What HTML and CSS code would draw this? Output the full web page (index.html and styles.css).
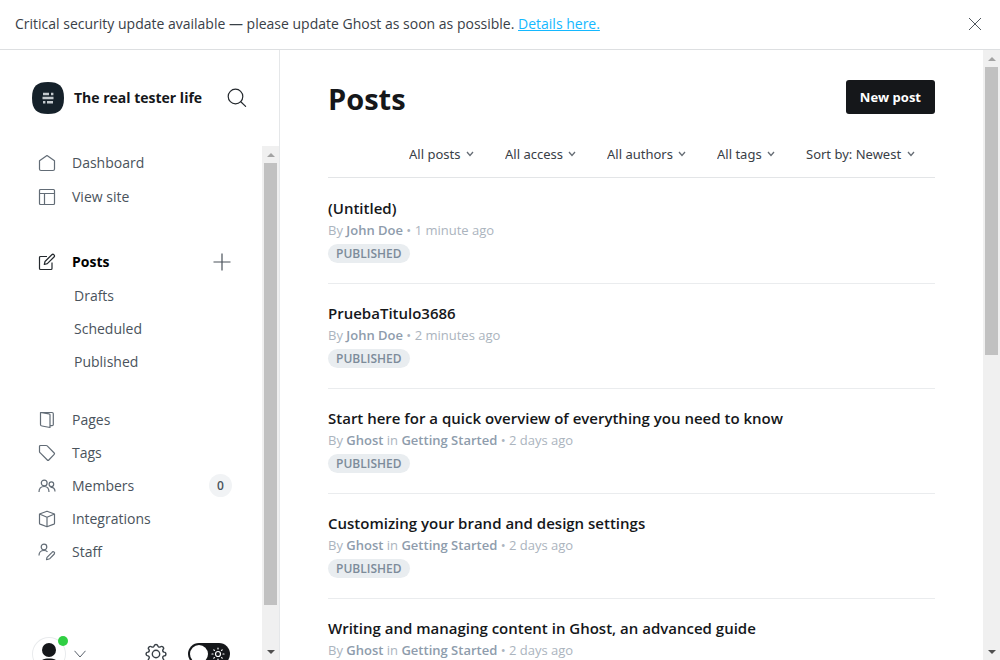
FILE: index.html
```
<!DOCTYPE html>
<html lang="en">
<head>
<meta charset="utf-8">
<meta name="viewport" content="width=device-width, initial-scale=1">
<title>Posts - The real tester life</title>
<link rel="stylesheet" href="styles.css">
</head>
<body>
<svg class="defs" aria-hidden="true">
  <symbol id="chevron" viewBox="0 0 8 6"><path d="M1 1l3 3.500L7 1" fill="none" stroke="#666d75" stroke-width="1.300"/></symbol>
  <symbol id="arrow-up" viewBox="0 0 8 4"><path d="M4 0l4 4H0z"/></symbol>
  <symbol id="arrow-down" viewBox="0 0 8 4"><path d="M4 4l4-4H0z"/></symbol>
</svg>

<aside class="alert">
  <p class="alert-text">Critical security update available — please update Ghost as soon as possible. <a href="#">Details here.</a></p>
  <button class="icon-button" type="button" aria-label="Close">
    <svg width="14" height="14" viewBox="0 0 14 14"><path d="M1 1l12 12M13 1L1 13" fill="none" stroke="#50575e"/></svg>
  </button>
</aside>

<div class="app">
  <div class="sidebar">
    <header class="site">
      <svg class="site-logo" width="32" height="32" viewBox="0 0 32 32">
        <path d="M16 0C27 0 32 4 32 16S27 32 16 32 0 28 0 16 5 0 16 0z" fill="#15212a"/>
        <path d="M11 12h6M19 12h2.400M10.500 16h11M11 20.300h2.400M15 20.300h6" stroke="#c3c9cd" stroke-width="2.400" fill="none"/>
      </svg>
      <span class="site-name">The real tester life</span>
      <button class="icon-button" type="button" aria-label="Search">
        <svg width="20" height="20" viewBox="0 0 20 20" fill="none" stroke="#24292e" stroke-width="1.200" stroke-linecap="round"><circle cx="8.500" cy="8.500" r="7.300"/><path d="M13.800 13.800l4.800 4.600"/></svg>
      </button>
    </header>

    <div class="sidebar-scroll">
      <div class="sidebar-content">
        <nav class="nav">
          <ul class="nav-group nav-top">
            <li><a href="#"><svg viewBox="0 0 18 18"><path d="M1.500 6.800L9 1.500l7.500 5.300v8.200a1.500 1.500 0 0 1-1.500 1.500H3A1.500 1.500 0 0 1 1.500 15z"/></svg>Dashboard</a></li>
            <li><a href="#"><svg viewBox="0 0 18 18"><rect x="1.500" y="1.500" width="15" height="15" rx="1"/><path d="M1.500 5.500h15M6.500 5.500v11"/></svg>View site</a></li>
          </ul>
          <ul class="nav-group nav-posts">
            <li class="active"><a href="#"><svg viewBox="0 0 18 18"><path d="M9 3.500H2.500a1 1 0 0 0-1 1v11a1 1 0 0 0 1 1h10.500a1 1 0 0 0 1-1V9.500M7 8.500l6.800-6.700a1.500 1.500 0 0 1 2.200 2.200L9.300 10.700l-3 .8z"/></svg>Posts</a>
              <button class="icon-button" type="button" aria-label="New post"><svg width="18" height="18" viewBox="0 0 18 18"><path d="M9 .5v17M.5 9h17" fill="none" stroke="#4a525a" stroke-width="1.200"/></svg></button>
            </li>
            <li class="sub"><a href="#">Drafts</a></li>
            <li class="sub"><a href="#">Scheduled</a></li>
            <li class="sub"><a href="#">Published</a></li>
          </ul>
          <ul class="nav-group nav-manage">
            <li><a href="#"><svg viewBox="0 0 18 18"><path d="M2.500 1.500l8.500 1.300a1 1 0 0 1 1 1v12.700l-8-1.500a1.500 1.500 0 0 1-1.500-1.500zM2.500 1.500h11.500a1.300 1.300 0 0 1 1.300 1.300V13.500a1.200 1.200 0 0 1-1.300 1.200h-2"/></svg>Pages</a></li>
            <li><a href="#"><svg viewBox="0 0 18 18"><path d="M1.500 2.500a1 1 0 0 1 1-1h5.700a1.500 1.500 0 0 1 1 .4l7 7.100a1 1 0 0 1 0 1.400L10.800 16a1 1 0 0 1-1.500 0L2 8.700a1.500 1.500 0 0 1-.5-1z"/></svg>Tags</a></li>
            <li><a href="#"><svg viewBox="0 0 18 18"><circle cx="6.200" cy="6" r="2.900"/><path d="M1 15c0-3.500 2-5.500 5.200-5.500S11 11.500 11 15"/><circle cx="13.400" cy="7.200" r="2.300"/><path d="M12.500 10.500c2.800-.5 4.500 1.300 4.500 4"/></svg>Members</a><span class="count">0</span></li>
            <li><a href="#"><svg viewBox="0 0 18 18"><path d="M1.500 4L9 1.200 16.500 4v9.200a1 1 0 0 1-.6.9L9 16.800l-6.900-2.700a1 1 0 0 1-.6-.9zM1.500 4L9 7.200 16.500 4M9 7.200v9.600"/></svg>Integrations</a></li>
            <li><a href="#"><svg viewBox="0 0 18 18"><circle cx="6" cy="4" r="2.800"/><path d="M1 12.500c0-3 2-5 5-5 1.500 0 2.700.5 3.500 1.300M9 14.300l5-5a1.300 1.300 0 0 1 2.300 1.700l-4.500 4.700-3.300 1z"/></svg>Staff</a></li>
          </ul>
        </nav>

        <footer class="user-bar">
          <button class="user-menu" type="button" aria-label="User menu">
            <span class="avatar">
              <svg width="34" height="34" viewBox="0 0 34 34"><circle cx="17" cy="13" r="7" fill="#15171a"/><path d="M6 30c0-6 5-8.500 11-8.500S28 24 28 30z" fill="#15171a"/></svg>
              <span class="status-dot"></span>
            </span>
            <svg width="12" height="8" viewBox="0 0 12 8"><path d="M.5.8L6 7 11.500.8" fill="none" stroke="#59616a"/></svg>
          </button>
          <a class="settings" href="#" aria-label="Settings">
            <svg width="22" height="22" viewBox="0 0 22 22" fill="none" stroke="#394047" stroke-width="1.400" stroke-linejoin="round"><circle cx="11" cy="11" r="3.700"/><path d="M9.200 2.800a1.900 1.900 0 0 1 3.600 0c.3 1.200 1.500 1.700 2.500 1.100a1.900 1.900 0 0 1 2.700 2.700c-.6 1-.1 2.200 1 2.500a1.900 1.900 0 0 1 0 3.800c-1.100.3-1.600 1.500-1 2.500a1.900 1.900 0 0 1-2.700 2.700c-1-.6-2.200-.1-2.500 1.100a1.900 1.900 0 0 1-3.600 0c-.3-1.200-1.500-1.700-2.500-1.100A1.900 1.900 0 0 1 4 15.400c.6-1 .1-2.200-1-2.500a1.900 1.900 0 0 1 0-3.800c1.100-.3 1.600-1.500 1-2.500a1.900 1.900 0 0 1 2.700-2.700c1 .6 2.200.1 2.500-1.100z"/></svg>
          </a>
          <label class="night">
            <input type="checkbox" aria-label="Night shift">
            <svg width="14" height="14" viewBox="0 0 14 14" fill="none" stroke="#fff" stroke-width="1.200" stroke-linecap="round"><circle cx="7" cy="7" r="2.500"/><path d="M7 1v1M7 12v1M1 7h1M12 7h1M2.800 2.800l.6.6M10.600 10.600l.6.6M2.800 11.200l.6-.6M10.600 3.400l.6-.6"/></svg>
          </label>
        </footer>
      </div>
      <div class="scrollbar" aria-hidden="true">
        <svg class="muted"><use href="#arrow-up"/></svg>
        <div class="track"><div class="thumb thumb-nav"></div></div>
        <svg><use href="#arrow-down"/></svg>
      </div>
    </div>
  </div>

  <main class="main">
    <div class="canvas">
      <header class="page-header">
        <h1>Posts</h1>
        <a class="new-post" href="#">New post</a>
      </header>
      <div class="filters">
        <div class="filter"><select aria-label="Post type"><option>All posts</option></select><svg><use href="#chevron"/></svg></div>
        <div class="filter"><select aria-label="Access"><option>All access</option></select><svg><use href="#chevron"/></svg></div>
        <div class="filter"><select aria-label="Author"><option>All authors</option></select><svg><use href="#chevron"/></svg></div>
        <div class="filter"><select aria-label="Tag"><option>All tags</option></select><svg><use href="#chevron"/></svg></div>
        <div class="filter"><select aria-label="Sort order"><option>Sort by: Newest</option></select><svg><use href="#chevron"/></svg></div>
      </div>
      <ol class="posts">
        <li><h2><a href="#">(Untitled)</a></h2><p>By <b>John Doe</b> • 1 minute ago</p><span class="badge">PUBLISHED</span></li>
        <li><h2><a href="#">PruebaTitulo3686</a></h2><p>By <b>John Doe</b> • 2 minutes ago</p><span class="badge">PUBLISHED</span></li>
        <li><h2><a href="#">Start here for a quick overview of everything you need to know</a></h2><p>By <b>Ghost</b> in <b>Getting Started</b> • 2 days ago</p><span class="badge">PUBLISHED</span></li>
        <li><h2><a href="#">Customizing your brand and design settings</a></h2><p>By <b>Ghost</b> in <b>Getting Started</b> • 2 days ago</p><span class="badge">PUBLISHED</span></li>
        <li><h2><a href="#">Writing and managing content in Ghost, an advanced guide</a></h2><p>By <b>Ghost</b> in <b>Getting Started</b> • 2 days ago</p></li>
      </ol>
    </div>
    <div class="scrollbar" aria-hidden="true">
      <svg class="muted"><use href="#arrow-up"/></svg>
      <div class="track"><div class="thumb thumb-main"></div></div>
      <svg><use href="#arrow-down"/></svg>
    </div>
  </main>
</div>
</body>
</html>
```

FILE: styles.css
```
*, *::before, *::after { box-sizing: border-box; }

body {
  margin: 0;
  height: 100vh;
  display: flex;
  flex-direction: column;
  overflow: hidden;
  background: #fff;
  color: #394047;
  font: 13px/20px "Open Sans", "Noto Sans", sans-serif;
}

h1, h2, p, ul, ol { margin: 0; padding: 0; }
ul, ol { list-style: none; }
a { color: inherit; text-decoration: none; }
svg { display: block; flex: none; }
.defs { position: absolute; width: 0; height: 0; }

.icon-button {
  display: flex;
  padding: 0;
  border: 0;
  background: none;
}

/* Alert bar */
.alert {
  flex: none;
  display: flex;
  align-items: center;
  justify-content: space-between;
  min-height: 50px;
  padding: 0 18px 1px 15px;
  border-bottom: 1px solid #dddfe1;
  font-size: 14px;
}
.alert-text a { color: #14b8ff; text-decoration: underline; }

.app { flex: 1; display: flex; min-height: 0; }

/* Sidebar */
.sidebar {
  flex: none;
  width: 280px;
  display: flex;
  flex-direction: column;
  border-right: 1px solid #e5e7e9;
}
.site {
  flex: none;
  display: flex;
  align-items: center;
  height: 96px;
  padding: 0 32px;
}
.site-name {
  flex: 1;
  margin-left: 10px;
  color: #15171a;
  font-size: 14px;
  font-weight: 700;
  white-space: nowrap;
}
.sidebar-scroll { flex: 1; display: flex; min-height: 0; }
.sidebar-content { flex: 1; overflow: hidden; }

.nav li {
  display: flex;
  align-items: center;
  justify-content: space-between;
  height: 33px;
  padding: 0 30px 0 38px;
  font-size: 14px;
  color: #4a535c;
}
.nav .nav-top li, .nav .active { height: 34px; }
.nav .active { padding-right: 31px; }
.nav a { display: flex; align-items: center; gap: 16px; }
.nav a svg {
  width: 18px;
  height: 18px;
  fill: none;
  stroke: #626c76;
  stroke-width: 1.2px;
  stroke-linejoin: round;
}
.nav .active { color: #000; font-weight: 700; }
.nav .active a svg { stroke: #24292e; }
.nav .sub { padding-left: 74px; }
.nav-posts { margin-top: 31px; }
.nav-manage { margin-top: 25px; }
.nav .count {
  min-width: 23px;
  height: 23px;
  border-radius: 12px;
  background: #f1f3f5;
  font-size: 12px;
  font-weight: 600;
  line-height: 23px;
  text-align: center;
}

.user-bar {
  display: flex;
  align-items: center;
  margin-top: 69px;
  padding: 0 32px;
}
.user-menu {
  display: flex;
  align-items: center;
  gap: 8px;
  padding: 0;
  border: 0;
  background: none;
}
.avatar {
  position: relative;
  border-radius: 50%;
  box-shadow: inset 0 0 0 1px #e9ebed;
}
.status-dot {
  position: absolute;
  top: -1px;
  right: -2px;
  width: 10px;
  height: 10px;
  border-radius: 50%;
  background: #30cf43;
}
.settings { margin-left: auto; margin-right: 21px; }
.night {
  display: flex;
  align-items: center;
  justify-content: space-between;
  width: 42px;
  height: 22px;
  padding: 0 5px 0 2px;
  border-radius: 11px;
  background: #15171a;
}
.night input {
  appearance: none;
  width: 18px;
  height: 18px;
  margin: 0;
  border-radius: 50%;
  background: #fff;
}

/* Scrollbars */
.scrollbar {
  flex: none;
  display: flex;
  flex-direction: column;
  align-items: center;
  width: 17px;
  background: #f0f0f0;
}
.scrollbar svg { width: 8px; height: 4px; margin: 7px 0 6px; fill: #505050; }
.scrollbar .muted { fill: #a3a3a3; }
.track { flex: 1; width: 13px; }
.thumb { background: #c1c1c1; }
.thumb-nav { height: 92%; }
.thumb-main { height: 50%; }

/* Post list */
.main { flex: 1; display: flex; min-width: 0; }
.canvas { flex: 1; min-width: 0; padding: 0 48px; overflow: hidden; }
.page-header {
  display: flex;
  align-items: center;
  justify-content: space-between;
  height: 94px;
}
h1 { padding-top: 3px; color: #15171a; font-size: 29px; line-height: 36px; font-weight: 700; }
.new-post {
  padding: 7px 14px;
  border-radius: 3px;
  background: #15171a;
  color: #fff;
  font-weight: 700;
}
.filters {
  display: flex;
  justify-content: flex-end;
  gap: 31px;
  height: 34px;
  margin-bottom: 1px;
  padding-right: 20px;
  border-bottom: 1px solid #e3e5e7;
  font-family: "Noto Sans", sans-serif;
}
.filter { display: flex; align-items: center; gap: 5px; height: 20px; }
.filter select {
  appearance: none;
  padding: 0;
  border: 0;
  background: none;
  color: inherit;
  font: inherit;
}
.filter svg { width: 8px; height: 6px; }

.posts li { padding: 18px 0 20px; border-bottom: 1px solid #eaecee; }
h2 { color: #15171a; font-size: 15px; line-height: 22px; font-weight: 600; }
.posts p { margin-top: 1px; color: #abb4be; }
.posts b { color: #8e9cac; font-weight: 600; }
.badge {
  display: block;
  width: fit-content;
  margin-top: 4px;
  padding: 0 8px;
  border-radius: 10px;
  background: #e9edf0;
  color: #7c8b9a;
  font-size: 12px;
  line-height: 19px;
  font-weight: 600;
}
```
